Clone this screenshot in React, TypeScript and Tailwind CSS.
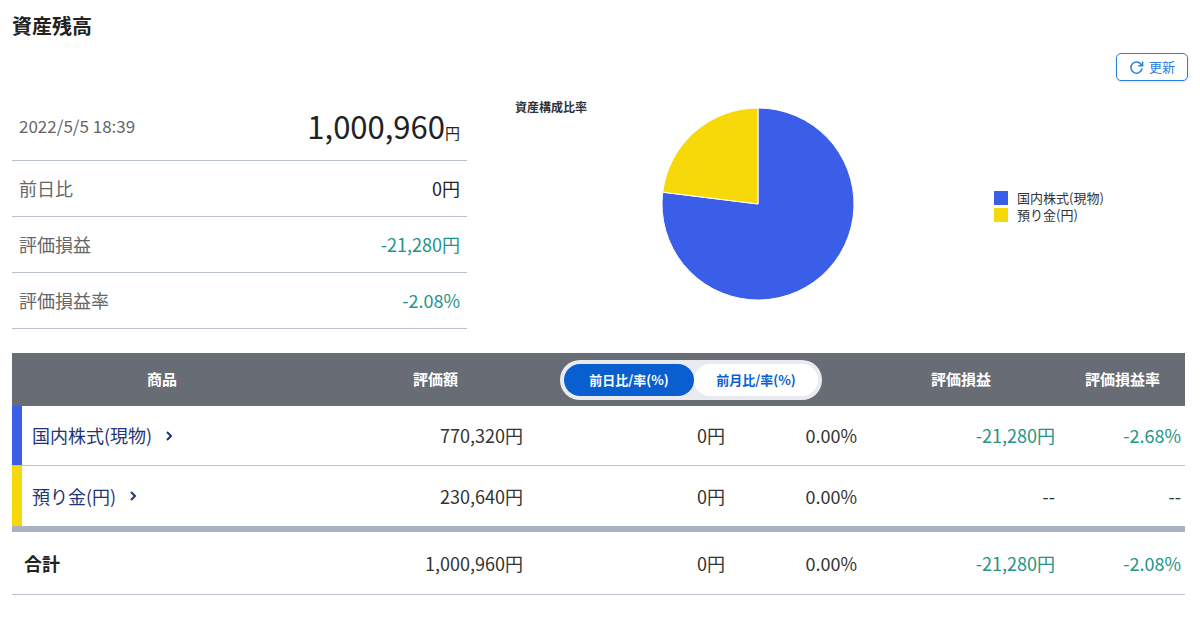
import React from "react";

const F = { fontFamily: '"Noto Sans CJK JP", "Noto Sans", sans-serif' };

function Pie() {
  const cx = 96, cy = 96, r = 96;
  const a = (230640 / 1000960) * 2 * Math.PI;
  const x = cx - r * Math.sin(a), y = cy - r * Math.cos(a);
  return (
    <svg width="192" height="192" viewBox="0 0 192 192">
      <path d={`M${cx} ${cy} L${cx} 0 A${r} ${r} 0 1 1 ${x} ${y} Z`} fill="#3a5ee8" stroke="#fff" strokeWidth="1" />
      <path d={`M${cx} ${cy} L${x} ${y} A${r} ${r} 0 0 1 ${cx} 0 Z`} fill="#f7d809" stroke="#fff" strokeWidth="1" />
    </svg>
  );
}

const Chev = () => (
  <svg width="10" height="12" viewBox="0 0 10 12" className="ml-3 inline-block">
    <path d="M3 2 L7 6 L3 10" fill="none" stroke="#1f3577" strokeWidth="2" />
  </svg>
);

const cols = "grid grid-cols-[300px_218px_200px_132px_198px_125px]";

export default function App() {
  return (
    <div style={F} className="w-[1200px] h-[617px] bg-white relative text-[#333]">
      <div className="px-[12px] pt-[12px]">
        <h1 className="text-[20px] font-bold text-[#222] leading-[28px]">資産残高</h1>
        <div className="flex justify-end mt-[13px]">
          <button className="h-[28px] w-[72px] border border-[#2a7de1] rounded-[5px] flex items-center justify-center gap-[5px] text-[#2a7de1] text-[13px] shadow-sm">
            <svg width="15" height="15" viewBox="0 0 16 16"><path d="M13.5 5.5 A6 6 0 1 0 14 9" fill="none" stroke="#2a7de1" strokeWidth="1.6" /><path d="M14.5 1.5 V6 H10" fill="none" stroke="#2a7de1" strokeWidth="1.6" /></svg>
            更新
          </button>
        </div>
        <div className="flex">
          <div className="w-[455px] mt-[7px]">
            <div className="h-[73px] flex items-center justify-between px-[7px] border-b border-[#b9c0d0] pt-[4px]">
              <span className="text-[17px] text-[#666]">2022/5/5 18:39</span>
              <span className="text-[#222]"><span className="text-[31px]">1,000,960</span><span className="text-[15px]">円</span></span>
            </div>
            {[
              ["前日比", "0円", "text-[#222]"],
              ["評価損益", "-21,280円", "text-[#259488]"],
              ["評価損益率", "-2.08%", "text-[#259488]"],
            ].map(([l, v, c]) => (
              <div key={l} className="h-[56px] flex items-center justify-between px-[7px] border-b border-[#b9c0d0]">
                <span className="text-[18px] text-[#666]">{l}</span>
                <span className={`text-[18px] ${c}`}>{v}</span>
              </div>
            ))}
          </div>
          <div className="ml-[48px] pt-[17px] text-[12px] font-bold text-[#333]">資産構成比率</div>
          <div className="ml-[75px] mt-[27px]"><Pie /></div>
          <div className="ml-[140px] mt-[108px] text-[13px] text-[#333] leading-[17px]">
            <div className="flex items-center gap-[9px]"><span className="w-[14px] h-[14px] bg-[#3a5ee8]" />国内株式(現物)</div>
            <div className="flex items-center gap-[9px]"><span className="w-[14px] h-[14px] bg-[#f7d809]" />預り金(円)</div>
          </div>
        </div>
        <div className="mt-[24px] w-[1173px]">
          <div className={`${cols} h-[53px] bg-[#686c75] text-white text-[15px] font-bold items-center`}>
            <div className="text-center">商品</div>
            <div className="text-right pr-[72px]">評価額</div>
            <div className="col-span-2 pl-[30px]">
              <div className="w-[262px] h-[40px] rounded-full bg-[#e9ebf0] p-[4px] flex">
                <div className="w-[130px] rounded-full bg-[#0a5fd0] text-white flex items-center justify-center text-[13px]">前日比/率(%)</div>
                <div className="flex-1 rounded-full bg-white text-[#0a5fd0] flex items-center justify-center text-[13px]">前月比/率(%)</div>
              </div>
            </div>
            <div className="text-center">評価損益</div>
            <div className="text-center">評価損益率</div>
          </div>
          {[
            ["国内株式(現物)", "770,320円", "-21,280円", "-2.68%", "bg-[#3a5ee8]"],
            ["預り金(円)", "230,640円", "--", "--", "bg-[#f7d809]"],
          ].map(([n, v, p, r, bar], i) => (
            <div key={n} className={`${cols} h-[60px] items-center text-[18px] relative border-b ${i === 1 ? "border-b-[6px] border-[#a9b2c3] h-[66px]" : "border-[#b9c0d0]"}`}>
              <span className={`absolute left-0 top-0 bottom-0 w-[10px] ${bar}`} />
              <div className="pl-[20px] text-[#1f3577] flex items-center">{n}<Chev /></div>
              <div className="text-right pr-[7px]">{v}</div>
              <div className="text-right pr-[5px]">0円</div>
              <div className="text-right pr-[5px]">0.00%</div>
              <div className={`text-right pr-[5px] ${p === "--" ? "text-[#333]" : "text-[#259488]"}`}>{p}</div>
              <div className={`text-right pr-[4px] ${r === "--" ? "text-[#333]" : "text-[#259488]"}`}>{r}</div>
            </div>
          ))}
          <div className={`${cols} h-[63px] items-center text-[18px] border-b border-[#b9c0d0]`}>
            <div className="pl-[12px] font-bold text-[#222]">合計</div>
            <div className="text-right pr-[7px]">1,000,960円</div>
            <div className="text-right pr-[5px]">0円</div>
            <div className="text-right pr-[5px]">0.00%</div>
            <div className="text-right pr-[5px] text-[#259488]">-21,280円</div>
            <div className="text-right pr-[4px] text-[#259488]">-2.08%</div>
          </div>
        </div>
      </div>
    </div>
  );
}
